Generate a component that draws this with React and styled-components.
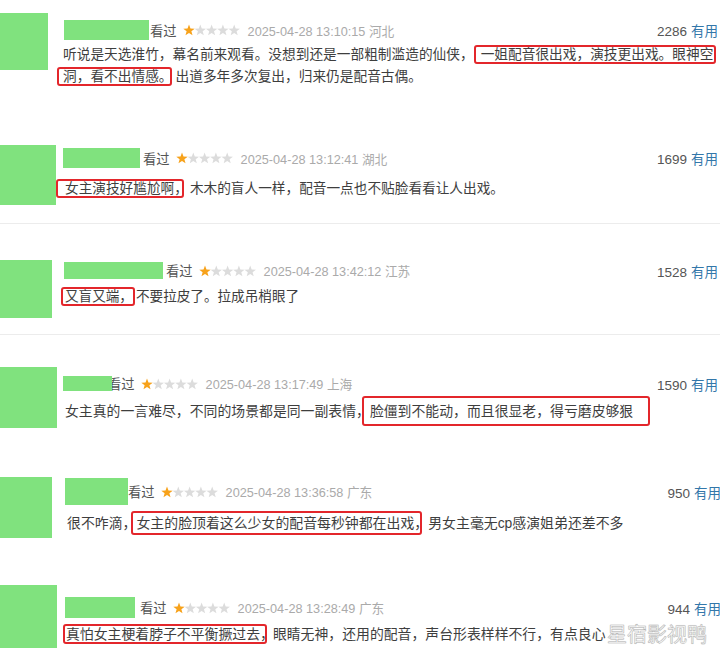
import React from 'react';
import styled, { createGlobalStyle } from 'styled-components';

const Global = createGlobalStyle`
  html, body { margin: 0; padding: 0; background: #fff; }
  body { overflow: hidden; }
`;

const Page = styled.div`
  position: relative;
  width: 720px;
  height: 658px;
  overflow: hidden;
  background: #fff;
  font-family: "Liberation Sans", "Noto Sans CJK SC", sans-serif;
  color: #3e3e3e;
`;

const Row = styled.section`
  display: flex;
  align-items: flex-start;
  box-sizing: border-box;
  height: ${p => p.$h}px;
  border-bottom: ${p => (p.$divider ? '1px solid #ececec' : 'none')};
`;

const Avatar = styled.div`
  flex: none;
  width: ${p => p.$w}px;
  height: ${p => p.$h}px;
  margin-top: ${p => p.$top}px;
  background: #80e27e;
`;

const Main = styled.div`
  flex: 1;
  min-width: 0;
  margin-left: ${p => p.$left}px;
  margin-right: ${p => p.$right}px;
  padding-top: ${p => p.$top}px;
`;

const Meta = styled.div`
  display: flex;
  align-items: center;
  height: ${p => p.$h}px;
  white-space: nowrap;
`;

const NameBar = styled.div`
  position: relative;
  z-index: 1;
  flex: none;
  width: ${p => p.$w}px;
  height: ${p => p.$h}px;
  background: #80e27e;
`;

const Watched = styled.span`
  margin-left: ${p => p.$gap}px;
  font-size: 13.3px;
  color: #555;
`;

const StarsSvg = styled.svg`
  flex: none;
  margin-left: 6px;
`;

const Time = styled.span`
  margin-left: 8px;
  font-size: 12.7px;
  color: #aaa;
`;

const Useful = styled.span`
  margin-left: auto;
  font-size: 13.5px;
  color: #555;
`;

const UsefulLink = styled.span`
  margin-left: 4px;
  color: #3377aa;
`;

const Body = styled.div`
  margin-top: ${p => p.$top}px;
  font-size: ${p => p.$fs}px;
  line-height: 22px;
  white-space: nowrap;
`;

const Line = styled.div`
  margin-left: ${p => p.$indent}px;
`;

const Mark = styled.span`
  border: 2px solid #e3262b;
  border-radius: 3px;
  padding: ${p => p.$pad || '0'};
  margin-left: ${p => p.$ml || 0}px;
  margin-right: ${p => p.$mr || 0}px;
`;

const Tight = styled.span`
  letter-spacing: ${p => p.$ls}px;
`;

const Watermark = styled.div`
  position: absolute;
  left: 607px;
  top: 622px;
  font-family: "Noto Sans CJK SC", sans-serif;
  font-size: 20px;
  line-height: 24px;
  color: #fff;
  -webkit-text-stroke: 0.5px #b4b4b4;
  text-shadow: 0 0 1px rgba(0, 0, 0, 0.25);
  white-space: nowrap;
`;

const STAR = '6,0.5 7.47,4.48 11.71,4.65 8.38,7.27 9.53,11.35 6,9 2.47,11.35 3.62,7.27 0.29,4.65 4.53,4.48';

function Stars() {
  return (
    <StarsSvg width="57" height="12" viewBox="0 0 57 12">
      {[0, 1, 2, 3, 4].map(i => (
        <polygon
          key={i}
          points={STAR}
          transform={`translate(${i * 11.3} 0)`}
          fill={i === 0 ? '#f7a21b' : '#dcdcdc'}
        />
      ))}
    </StarsSvg>
  );
}

function Review({ h, divider, av, bar, watchGap, time, count, right, bodyTop, fs, children }) {
  return (
    <Row $h={h} $divider={divider}>
      <Avatar $w={av.w} $h={av.h} $top={av.t} />
      <Main $left={bar.x - av.w} $right={right} $top={bar.t}>
        <Meta $h={bar.h}>
          <NameBar $w={bar.w} $h={bar.h} />
          <Watched $gap={watchGap}>看过</Watched>
          <Stars />
          <Time>{time}</Time>
          <Useful>
            {count}
            <UsefulLink>有用</UsefulLink>
          </Useful>
        </Meta>
        <Body $top={bodyTop} $fs={fs}>{children}</Body>
      </Main>
    </Row>
  );
}

export default function App() {
  return (
    <Page>
      <Global />
      <Review
        h={135}
        av={{ w: 48, h: 57, t: 13 }}
        bar={{ x: 64, w: 85, h: 20, t: 20 }}
        watchGap={1}
        time="2025-04-28 13:10:15 河北"
        count={2286}
        right={2}
        bodyTop={4}
        fs={13.7}
      >
        <Line $indent={-1}>
          听说是天选淮竹，幕名前来观看。没想到还是一部粗制滥造的仙侠，
          <Mark $pad="0 1px 0 5px">一姐配音很出戏，演技更出戏。眼神空</Mark>
        </Line>
        <Line $indent={-7}>
          <Mark $pad="0 1px 0 4px" $mr={4}>
            洞，看不出情感<Tight $ls={-4}>。</Tight>
          </Mark>
          出道多年多次复出，归来仍是配音古偶。
        </Line>
      </Review>

      <Review
        h={89}
        divider
        av={{ w: 56, h: 60, t: 10 }}
        bar={{ x: 63, w: 77, h: 20, t: 13 }}
        watchGap={3}
        time="2025-04-28 13:12:41 湖北"
        count={1699}
        right={2}
        bodyTop={10}
        fs={13.66}
      >
        <Line $indent={-7}>
          <Mark $pad="0 0 0 7px" $mr={6}>
            女主演技好尴尬啊<Tight $ls={-6}>，</Tight>
          </Mark>
          木木的盲人一样，配音一点也不贴脸看看让人出戏。
        </Line>
      </Review>

      <Review
        h={111}
        divider
        av={{ w: 52, h: 58, t: 36 }}
        bar={{ x: 64, w: 99, h: 17, t: 38 }}
        watchGap={3}
        time="2025-04-28 13:42:12 江苏"
        count={1528}
        right={2}
        bodyTop={7}
        fs={13.6}
      >
        <Line $indent={-3}>
          <Mark $pad="0 0 0 2px" $mr={1}>又盲又端，</Mark>
          不要拉皮了。拉成吊梢眼了
        </Line>
      </Review>

      <Review
        h={125}
        av={{ w: 57, h: 61, t: 32 }}
        bar={{ x: 63, w: 49, h: 15, t: 41 }}
        watchGap={-4}
        time="2025-04-28 13:17:49 上海"
        count={1590}
        right={2}
        bodyTop={9}
        fs={13.86}
      >
        <Line $indent={2}>
          女主真的一言难尽，不同的场景都是同一副表情，
          <Mark $ml={-8} $pad="5px 15px 5px 6px">脸僵到不能动，而且很显老，得亏磨皮够狠</Mark>
        </Line>
      </Review>

      <Review
        h={112}
        av={{ w: 52, h: 61, t: 17 }}
        bar={{ x: 65, w: 63, h: 27, t: 18 }}
        watchGap={0}
        time="2025-04-28 13:36:58 广东"
        count={950}
        right={-1}
        bodyTop={7}
        fs={13.9}
      >
        <Line $indent={2}>
          很不咋滴，
          <Mark $ml={-5.5} $mr={6} $pad="2px 0 2px 3.5px">
            女主的脸顶着这么少女的配音每秒钟都在出戏<Tight $ls={-8}>，</Tight>
          </Mark>
          男女主毫无cp感演姐弟还差不多
        </Line>
      </Review>

      <Review
        h={86}
        av={{ w: 57, h: 63, t: 13 }}
        bar={{ x: 65, w: 70, h: 21, t: 25 }}
        watchGap={5}
        time="2025-04-28 13:28:49 广东"
        count={944}
        right={-1}
        bodyTop={5}
        fs={13.86}
      >
        <Line $indent={-2}>
          <Mark $pad="0 0 0 1px" $mr={6}>
            真怕女主梗着脖子不平衡撅过去<Tight $ls={-9}>，</Tight>
          </Mark>
          眼睛无神，还用的配音，声台形表样样不行，有点良心
        </Line>
      </Review>

      <Watermark>星宿影视鸭</Watermark>
    </Page>
  );
}
